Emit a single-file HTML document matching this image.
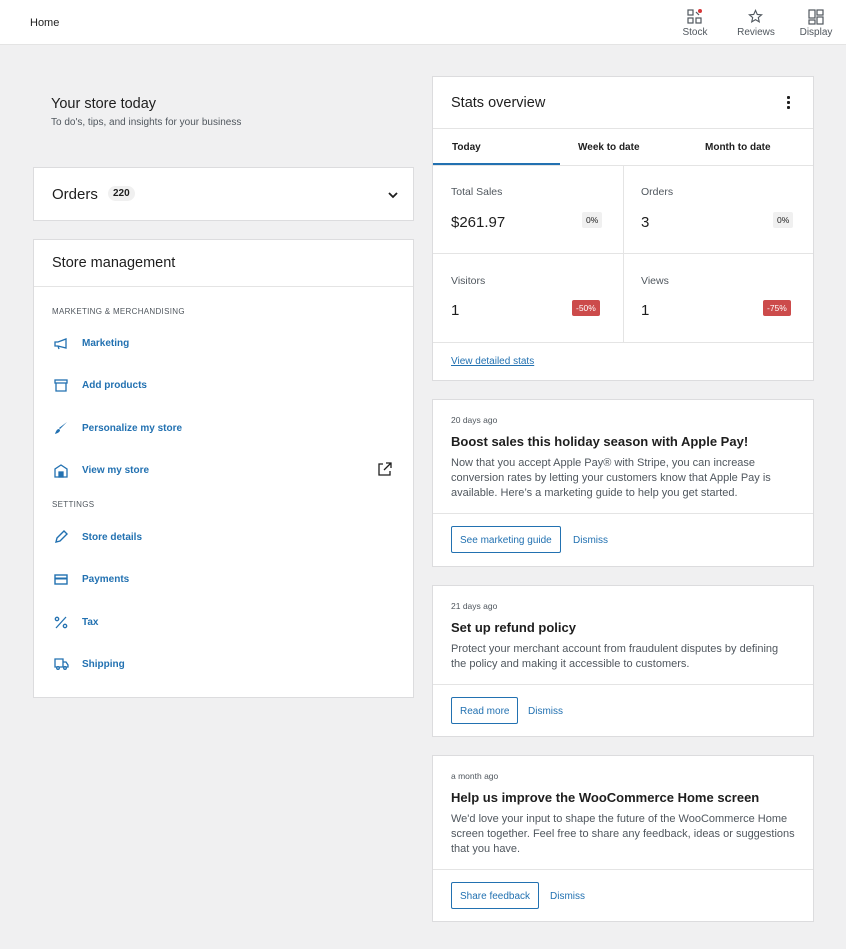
<!DOCTYPE html>
<html><head><meta charset="utf-8"><style>
*{box-sizing:border-box;margin:0;padding:0}
body{width:846px;height:949px;background:#f0f0f1;font-family:"Liberation Sans",sans-serif;color:#1e1e1e;position:relative;overflow:hidden}
.hdr{position:absolute;left:0;top:0;width:846px;height:45px;background:#fff;border-bottom:1px solid #e4e4e4}
.abs{position:absolute}
.card{position:absolute;background:#fff;border:1px solid #dcdcde}
.hi{position:absolute;text-align:center;font-size:10px;color:#50575e;width:40px}
.ico{position:absolute;left:20px}
.mi{position:absolute;left:48px;font-size:10px;font-weight:bold;color:#2271b1}
.sec{position:absolute;left:18px;font-size:8px;color:#50575e;letter-spacing:.3px}
.badge{position:absolute;font-size:8.5px;padding:3px 4px;border-radius:2px}
.btn{position:absolute;border:1px solid #2271b1;color:#2271b1;font-size:10px;padding:8px 8px 0;height:27px;line-height:11px;border-radius:2px;white-space:nowrap}
.dis{position:absolute;color:#2271b1;font-size:10px}
.tm{position:absolute;left:18px;font-size:8.5px;color:#50575e}
.tt{position:absolute;left:18px;font-size:13px;font-weight:bold}
.tx{position:absolute;left:18px;font-size:11px;color:#50575e;line-height:15px;width:345px}
</style></head><body>
<div class="hdr">
<div class="abs" style="left:30px;top:17px;font-size:11px">Home</div>
<svg class="abs" style="left:687px;top:9px" width="16" height="16" viewBox="0 0 16 16" fill="none" stroke="#50575e" stroke-width="1.2"><rect x="1" y="1" width="5" height="5"/><rect x="1" y="9" width="5" height="5"/><rect x="9" y="9" width="5" height="5"/><path d="M9 3l3 3"/><circle cx="13" cy="2" r="2" fill="#d63638" stroke="none"/></svg>
<div class="hi" style="left:675px;top:27px">Stock</div>
<svg class="abs" style="left:748px;top:9px" width="15" height="15" viewBox="0 0 16 16" fill="none" stroke="#50575e" stroke-width="1.2"><path d="M8 1.5l1.9 4.3 4.6.4-3.5 3 1 4.5L8 11.4 4 13.7l1-4.5-3.5-3 4.6-.4z"/></svg>
<div class="hi" style="left:736px;top:27px">Reviews</div>
<svg class="abs" style="left:808px;top:9px" width="16" height="16" viewBox="0 0 16 16" fill="none" stroke="#50575e" stroke-width="1.2"><rect x="1" y="1" width="6" height="8"/><rect x="9" y="1" width="6" height="5"/><rect x="1" y="11" width="6" height="4"/><rect x="9" y="8" width="6" height="7"/></svg>
<div class="hi" style="left:796px;top:27px">Display</div>
</div>

<div class="abs" style="left:51px;top:96px;font-size:14.5px">Your store today</div>
<div class="abs" style="left:51px;top:117px;font-size:10px;color:#50575e">To do's, tips, and insights for your business</div>

<div class="card" style="left:33px;top:167px;width:381px;height:54px">
<div class="abs" style="left:18px;top:18px;font-size:15px">Orders</div>
<div class="abs" style="left:74px;top:18px;font-size:10px;background:#f0f0f0;border-radius:8px;padding:2px 5px;font-weight:bold">220</div>
<svg class="abs" style="left:353px;top:22px" width="12" height="10" viewBox="0 0 12 10"><path d="M2 3l4 4 4-4" fill="none" stroke="#1e1e1e" stroke-width="1.8"/></svg>
</div>

<div class="card" style="left:33px;top:239px;width:381px;height:459px">
<div class="abs" style="left:18px;top:15px;font-size:14.5px">Store management</div>
<div class="abs" style="left:0;top:46px;width:379px;border-top:1px solid #e4e4e4"></div>
<div class="sec" style="top:67px">MARKETING &amp; MERCHANDISING</div>
<svg class="ico" style="top:98px" width="14" height="12" viewBox="0 0 14 12" fill="none" stroke="#2271b1" stroke-width="1.3"><path d="M1 4h3l8-3v9L4 8H1z M4 8l1 3"/></svg><div class="mi" style="top:98px">Marketing</div>
<svg class="ico" style="top:139px" width="14" height="13" viewBox="0 0 14 13" fill="none" stroke="#2271b1" stroke-width="1.3"><rect x="1" y="1" width="12" height="3"/><path d="M2 4v8h10V4"/></svg><div class="mi" style="top:140px">Add products</div>
<svg class="ico" style="top:181px" width="14" height="14" viewBox="0 0 14 14"><path d="M13 1L6 8l-1-1z M5 8c-2 0-3 2-4 5 3-1 5-2 5-4z" fill="#2271b1"/></svg><div class="mi" style="top:183px">Personalize my store</div>
<svg class="ico" style="top:224px" width="14" height="14" viewBox="0 0 14 14" fill="none" stroke="#2271b1" stroke-width="1.3"><path d="M1 13V5l6-4 6 4v8z"/><rect x="5" y="8" width="4" height="5" fill="#2271b1"/></svg><div class="mi" style="top:225px">View my store</div>
<svg class="abs" style="left:343px;top:222px" width="15" height="15" viewBox="0 0 15 15" fill="none" stroke="#1e1e1e" stroke-width="1.3"><path d="M6 2H2v11h11V9 M9 1h5v5 M14 1L7 8"/></svg>
<div class="sec" style="top:260px">SETTINGS</div>
<svg class="ico" style="top:290px" width="14" height="14" viewBox="0 0 14 14" fill="none" stroke="#2271b1" stroke-width="1.4"><path d="M2 12l1-4 7-7 3 3-7 7z"/></svg><div class="mi" style="top:292px">Store details</div>
<svg class="ico" style="top:334px" width="14" height="11" viewBox="0 0 14 11" fill="none" stroke="#2271b1" stroke-width="1.4"><rect x="1" y="1" width="12" height="9"/><path d="M1 4.5h12" stroke-width="2"/></svg><div class="mi" style="top:334px">Payments</div>
<svg class="ico" style="top:376px" width="14" height="13" viewBox="0 0 14 13" fill="none" stroke="#2271b1" stroke-width="1.3"><circle cx="3" cy="3" r="1.7"/><circle cx="11" cy="10" r="1.7"/><path d="M12 1L2 12"/></svg><div class="mi" style="top:377px">Tax</div>
<svg class="ico" style="top:418px" width="15" height="12" viewBox="0 0 15 12" fill="none" stroke="#2271b1" stroke-width="1.3"><path d="M1 1h8v8H1z M9 4h3l2 3v2H9"/><circle cx="4" cy="10" r="1.3" fill="#fff"/><circle cx="11" cy="10" r="1.3" fill="#fff"/></svg><div class="mi" style="top:419px">Shipping</div>
</div>

<div class="card" style="left:432px;top:76px;width:382px;height:305px">
<div class="abs" style="left:18px;top:18px;font-size:14.5px">Stats overview</div>
<div class="abs" style="left:354px;top:18px;width:3px;height:15px;background:radial-gradient(circle,#1e1e1e 1.5px,transparent 1.6px) 0 0/3px 5px"></div>
<div class="abs" style="left:0;top:51px;width:380px;border-top:1px solid #e4e4e4"></div>
<div class="abs" style="left:19px;top:65px;font-size:10px;font-weight:bold">Today</div>
<div class="abs" style="left:145px;top:65px;font-size:10px;font-weight:bold">Week to date</div>
<div class="abs" style="left:272px;top:65px;font-size:10px;font-weight:bold">Month to date</div>
<div class="abs" style="left:0;top:86px;width:127px;height:3px;background:#2271b1"></div>
<div class="abs" style="left:0;top:88px;width:380px;border-top:1px solid #e4e4e4"></div>
<div class="abs" style="left:0;top:176px;width:380px;border-top:1px solid #e4e4e4"></div>
<div class="abs" style="left:0;top:265px;width:380px;border-top:1px solid #e4e4e4"></div>
<div class="abs" style="left:190px;top:88px;height:177px;border-left:1px solid #e4e4e4"></div>
<div class="abs" style="left:18px;top:109px;font-size:10.5px;color:#50575e">Total Sales</div>
<div class="abs" style="left:18px;top:137px;font-size:15px">$261.97</div>
<div class="badge" style="left:149px;top:135px;background:#f0f0f0">0%</div>
<div class="abs" style="left:208px;top:109px;font-size:10.5px;color:#50575e">Orders</div>
<div class="abs" style="left:208px;top:137px;font-size:15px">3</div>
<div class="badge" style="left:340px;top:135px;background:#f0f0f0">0%</div>
<div class="abs" style="left:18px;top:198px;font-size:10.5px;color:#50575e">Visitors</div>
<div class="abs" style="left:18px;top:225px;font-size:15px">1</div>
<div class="badge" style="left:139px;top:223px;background:#cc4b4b;color:#fff">-50%</div>
<div class="abs" style="left:208px;top:198px;font-size:10.5px;color:#50575e">Views</div>
<div class="abs" style="left:208px;top:225px;font-size:15px">1</div>
<div class="badge" style="left:330px;top:223px;background:#cc4b4b;color:#fff">-75%</div>
<div class="abs" style="left:18px;top:279px;font-size:10px;color:#2271b1;text-decoration:underline">View detailed stats</div>
</div>

<div class="card" style="left:432px;top:399px;width:382px;height:168px">
<div class="tm" style="top:15px">20 days ago</div>
<div class="tt" style="top:34px">Boost sales this holiday season with Apple Pay!</div>
<div class="tx" style="top:56px">Now that you accept Apple Pay® with Stripe, you can increase conversion rates by letting your customers know that Apple Pay is available. Here’s a marketing guide to help you get started.</div>
<div class="abs" style="left:0;top:113px;width:380px;border-top:1px solid #e4e4e4"></div>
<div class="btn" style="left:18px;top:126px">See marketing guide</div>
<div class="dis" style="left:140px;top:135px">Dismiss</div>
</div>

<div class="card" style="left:432px;top:585px;width:382px;height:152px">
<div class="tm" style="top:15px">21 days ago</div>
<div class="tt" style="top:34px">Set up refund policy</div>
<div class="tx" style="top:56px">Protect your merchant account from fraudulent disputes by defining the policy and making it accessible to customers.</div>
<div class="abs" style="left:0;top:98px;width:380px;border-top:1px solid #e4e4e4"></div>
<div class="btn" style="left:18px;top:111px">Read more</div>
<div class="dis" style="left:95px;top:120px">Dismiss</div>
</div>

<div class="card" style="left:432px;top:755px;width:382px;height:167px">
<div class="tm" style="top:15px">a month ago</div>
<div class="tt" style="top:34px">Help us improve the WooCommerce Home screen</div>
<div class="tx" style="top:56px">We'd love your input to shape the future of the WooCommerce Home screen together. Feel free to share any feedback, ideas or suggestions that you have.</div>
<div class="abs" style="left:0;top:113px;width:380px;border-top:1px solid #e4e4e4"></div>
<div class="btn" style="left:18px;top:126px">Share feedback</div>
<div class="dis" style="left:117px;top:135px">Dismiss</div>
</div>
</body></html>
